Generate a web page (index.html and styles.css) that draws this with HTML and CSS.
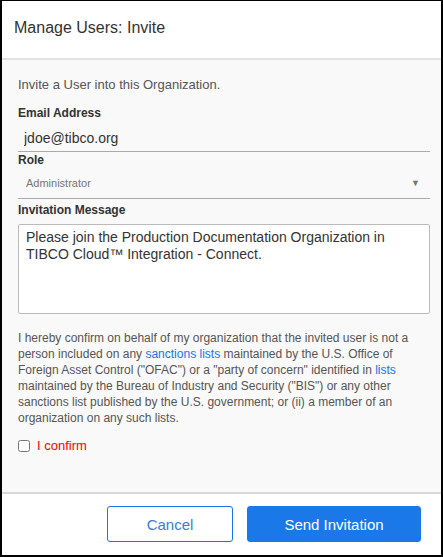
FILE: index.html
```html
<!DOCTYPE html>
<html lang="en">
<head>
  <meta charset="UTF-8" />
  <meta name="viewport" content="width=device-width, initial-scale=1.0" />
  <title>Manage Users: Invite</title>
  <link rel="stylesheet" href="styles.css">
</head>
<body>
  <div class="dialog">
    <div class="dialog-header">
      <h1>Manage Users: Invite</h1>
    </div>

    <div class="dialog-body">
      <p class="intro">Invite a User into this Organization.</p>

      <label class="field-label" for="email">Email Address</label>
      <input class="line-input" type="text" id="email" value="jdoe@tibco.org">

      <label class="field-label" for="role">Role</label>
      <div class="select-box" id="role">
        <span>Administrator</span>
        <span class="caret">&#9660;</span>
      </div>

      <label class="field-label msg-label" for="message">Invitation Message</label>
      <textarea id="message" class="message">Please join the Production Documentation Organization in TIBCO Cloud™ Integration - Connect.</textarea>

      <p class="legal">
        I hereby confirm on behalf of my organization that the invited user is not a
        person included on any <a href="#">sanctions lists</a> maintained by the U.S. Office of
        Foreign Asset Control ("OFAC") or a "party of concern" identified in <a href="#">lists</a>
        maintained by the Bureau of Industry and Security ("BIS") or any other
        sanctions list published by the U.S. government; or (ii) a member of an
        organization on any such lists.
      </p>

      <label class="confirm">
        <input type="checkbox">
        <span>I confirm</span>
      </label>
    </div>

    <div class="dialog-footer">
      <button class="btn btn-outline">Cancel</button>
      <button class="btn btn-primary">Send Invitation</button>
    </div>
  </div>
</body>
</html>
```

FILE: styles.css
```css
* {
  box-sizing: border-box;
}
body {
  margin: 0;
  font-family: "Liberation Sans", Arial, sans-serif;
  color: #333;
}
.dialog {
  width: 443px;
  height: 557px;
  border: 2px solid #000;
  border-top-width: 1px;
  display: flex;
  flex-direction: column;
  background: #f9f9f9;
}
.dialog-header {
  height: 59px;
  background: #fff;
  border-bottom: 2px solid #e2e2e2;
  padding: 0 12px 4px;
  display: flex;
  align-items: center;
}
.dialog-header h1 {
  margin: 0;
  font-size: 16px;
  font-weight: normal;
  color: #333;
}
.dialog-body {
  flex: 1;
  padding: 17px 11px 0 16px;
}
.intro {
  margin: 0;
  font-size: 13px;
  line-height: 16px;
  color: #555;
}
.field-label {
  display: block;
  font-size: 12px;
  font-weight: bold;
  line-height: 16px;
  color: #333;
}
.intro + .field-label {
  margin-top: 12px;
}
.line-input {
  display: block;
  width: 100%;
  height: 31px;
  border: none;
  border-bottom: 1px solid #aaa;
  background: transparent;
  padding: 3px 6px 0;
  font-family: inherit;
  font-size: 14px;
  color: #333;
  outline: none;
}
.select-box {
  display: flex;
  justify-content: space-between;
  align-items: center;
  height: 31px;
  border-bottom: 1px solid #aaa;
  padding: 0 10px 0 8px;
  font-size: 11px;
  color: #777;
}
.caret {
  font-size: 9px;
  color: #777;
}
.msg-label {
  margin-top: 3px;
}
.message {
  display: block;
  width: 100%;
  height: 90px;
  margin-top: 6px;
  border: 1px solid #bbb;
  border-radius: 2px;
  background: #fff;
  padding: 4px 7px;
  font-family: inherit;
  font-size: 14px;
  line-height: 17px;
  color: #333;
  resize: none;
}
.legal {
  margin: 16px 0 0;
  font-size: 12px;
  line-height: 16px;
  color: #555;
}
.legal a {
  color: #1a73e8;
  text-decoration: none;
}
.confirm {
  display: flex;
  align-items: center;
  gap: 7px;
  margin-top: 12px;
  font-size: 13px;
  color: #ff0000;
}
.confirm input {
  margin: 0;
  width: 12px;
  height: 12px;
}
.dialog-footer {
  height: 63px;
  background: #fff;
  border-top: 2px solid #d8d8d8;
  display: flex;
  justify-content: flex-end;
  align-items: flex-start;
  gap: 14px;
  padding: 12px 20px 0 0;
}
.btn {
  height: 36px;
  border-radius: 3px;
  font-family: inherit;
  font-size: 15px;
  cursor: pointer;
}
.btn-outline {
  width: 126px;
  background: #fff;
  border: 1px solid #1a73e8;
  color: #3a7bdc;
}
.btn-primary {
  width: 174px;
  background: #1a78e8;
  border: 1px solid #1a78e8;
  color: #fff;
}
```
